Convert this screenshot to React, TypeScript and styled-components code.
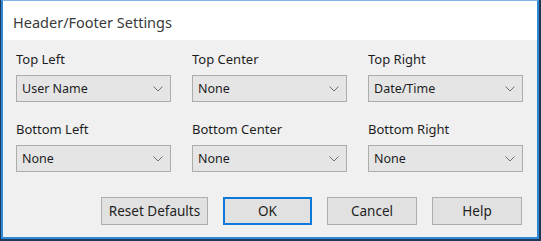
import { ReactElement } from "react"
import styled, { createGlobalStyle } from "styled-components"

const GlobalStyle = createGlobalStyle`
  html, body {
    margin: 0;
    padding: 0;
    background: #ffffff;
  }
  body {
    font-family: "Noto Sans", "Open Sans", "DejaVu Sans", sans-serif;
  }
`

const Frame = styled.div`
  width: 541px;
  height: 241px;
  box-sizing: border-box;
  padding: 0 2px 2px 1px;
  background: #1f3a56;
`

const Window = styled.div`
  display: flex;
  flex-direction: column;
  width: 100%;
  height: 100%;
  box-sizing: border-box;
  border: 2px solid #2f88d6;
  border-top: 1px solid #7fb4e4;
  background: #f0f0f0;
`

const TitleBar = styled.div`
  display: flex;
  align-items: center;
  height: 39px;
  box-sizing: border-box;
  padding: 3px 0 0 10px;
  background: #ffffff;
  color: #3a3a3a;
  font-size: 14.5px;
`

const Body = styled.div`
  display: flex;
  flex-direction: column;
  padding: 11px 15px 0 13px;
`

const Grid = styled.div`
  display: grid;
  grid-template-columns: repeat(3, 155px);
  column-gap: 21px;
  row-gap: 19px;
`

const Field = styled.div`
  display: flex;
  flex-direction: column;
  gap: 8px;
`

const Label = styled.div`
  height: 16px;
  line-height: 16px;
  font-size: 13px;
  color: #1e1e1e;
`

const Select = styled.div`
  display: flex;
  align-items: center;
  justify-content: space-between;
  height: 27px;
  box-sizing: border-box;
  padding: 0 7px 0 5px;
  border: 1px solid #acacac;
  background: #e5e5e5;
  font-size: 12.5px;
  color: #1e1e1e;
`

const Chevron = styled.svg`
  width: 10px;
  height: 6px;
`

const ButtonRow = styled.div`
  display: flex;
  justify-content: flex-end;
  gap: 15px;
  margin-top: 25px;
`

const Button = styled.div<{ $width: number; $primary?: boolean }>`
  display: flex;
  align-items: center;
  justify-content: center;
  width: ${(p) => p.$width}px;
  height: 28px;
  box-sizing: border-box;
  border: ${(p) => (p.$primary ? "2px solid #0a7ad6" : "1px solid #adadad")};
  background: #e1e1e1;
  font-size: 13.5px;
  color: #1e1e1e;
`

const fields = [
  { label: "Top Left", value: "User Name" },
  { label: "Top Center", value: "None" },
  { label: "Top Right", value: "Date/Time" },
  { label: "Bottom Left", value: "None" },
  { label: "Bottom Center", value: "None" },
  { label: "Bottom Right", value: "None" },
]

function App(): ReactElement {
  return (
    <Frame>
      <GlobalStyle />
      <Window>
        <TitleBar>Header/Footer Settings</TitleBar>
        <Body>
          <Grid>
            {fields.map((f) => (
              <Field key={f.label}>
                <Label>{f.label}</Label>
                <Select>
                  <span>{f.value}</span>
                  <Chevron viewBox="0 0 10 6">
                    <polyline points="0.5,0.5 5,5 9.5,0.5" fill="none" stroke="#707070" strokeWidth="1" />
                  </Chevron>
                </Select>
              </Field>
            ))}
          </Grid>
          <ButtonRow>
            <Button $width={107}>Reset Defaults</Button>
            <Button $width={89} $primary>OK</Button>
            <Button $width={90}>Cancel</Button>
            <Button $width={90}>Help</Button>
          </ButtonRow>
        </Body>
      </Window>
    </Frame>
  )
}

export default App
